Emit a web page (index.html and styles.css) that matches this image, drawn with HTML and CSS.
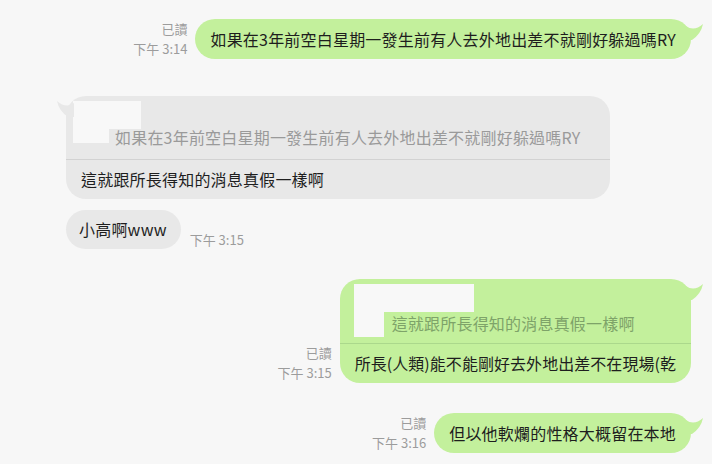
FILE: index.html
```html
<!DOCTYPE html>
<html lang="zh-Hant">
<head>
    <meta charset="UTF-8">
    <meta name="viewport" content="width=device-width, initial-scale=1.0">
    <title>Chat</title>
    <link rel="stylesheet" href="styles.css">
</head>
<body>
    <div class="chat">
        <div class="row mine">
            <div class="meta">
                <div>已讀</div>
                <div>下午 3:14</div>
            </div>
            <div class="bubble green">
                <svg class="tail tail-right" width="18" height="20" viewBox="0 0 18 20"><path d="M0 4 Q8 10 17 2 Q15 12 6 18 L0 18 Z"/></svg>
                <div class="text">如果在3年前空白星期一發生前有人去外地出差不就剛好躲過嗎RY</div>
            </div>
        </div>

        <div class="row theirs first">
            <div class="bubble gray reply">
                <svg class="tail tail-left" width="18" height="20" viewBox="0 0 18 20"><path d="M18 4 Q10 10 1 2 Q3 12 12 18 L18 18 Z"/></svg>
                <div class="quote quote-a">
                    <div class="thumb-top"></div>
                    <div class="quote-row">
                        <div class="thumb-foot"></div>
                        <span class="quote-text">如果在3年前空白星期一發生前有人去外地出差不就剛好躲過嗎RY</span>
                    </div>
                </div>
                <div class="text body">這就跟所長得知的消息真假一樣啊</div>
            </div>
        </div>

        <div class="row theirs next">
            <div class="bubble gray">
                <div class="text">小高啊www</div>
            </div>
            <div class="meta single">下午 3:15</div>
        </div>

        <div class="row mine spaced">
            <div class="meta">
                <div>已讀</div>
                <div>下午 3:15</div>
            </div>
            <div class="bubble green reply">
                <svg class="tail tail-right" width="18" height="20" viewBox="0 0 18 20"><path d="M0 4 Q8 10 17 2 Q15 12 6 18 L0 18 Z"/></svg>
                <div class="quote quote-b">
                    <div class="thumb-top"></div>
                    <div class="quote-row">
                        <div class="thumb-foot"></div>
                        <span class="quote-text">這就跟所長得知的消息真假一樣啊</span>
                    </div>
                </div>
                <div class="text body">所長(人類)能不能剛好去外地出差不在現場(乾</div>
            </div>
        </div>

        <div class="row mine spaced">
            <div class="meta">
                <div>已讀</div>
                <div>下午 3:16</div>
            </div>
            <div class="bubble green">
                <svg class="tail tail-right" width="18" height="20" viewBox="0 0 18 20"><path d="M0 4 Q8 10 17 2 Q15 12 6 18 L0 18 Z"/></svg>
                <div class="text">但以他軟爛的性格大概留在本地</div>
            </div>
        </div>
    </div>
</body>
</html>
```

FILE: styles.css
```css
* {
    margin: 0;
    padding: 0;
    box-sizing: border-box;
}

body {
    background-color: #f7f7f7;
    font-family: "Noto Sans CJK TC", "Noto Sans", sans-serif;
    color: #1e1e1e;
}

.chat {
    padding: 19px 21px 0 0;
}

.row {
    display: flex;
    align-items: flex-end;
    gap: 8px;
}

.row.mine {
    justify-content: flex-end;
}

.row.theirs {
    padding-left: 66px;
}

.row.first {
    margin-top: 37px;
}

.row.next {
    margin-top: 11px;
    gap: 9px;
}

.row.spaced {
    margin-top: 30px;
}

.meta {
    font-size: 13px;
    line-height: 20px;
    color: #9c9c9c;
    text-align: right;
    white-space: nowrap;
}

.meta.single {
    margin-bottom: -1px;
}

.bubble {
    position: relative;
    border-radius: 20px;
    font-size: 16px;
    letter-spacing: 0.2px;
    white-space: nowrap;
}

.bubble.green {
    background-color: #c3f09c;
}

.bubble.gray {
    background-color: #e8e8e8;
}

.bubble .text {
    padding: 8px 15px;
    line-height: 24px;
}

.bubble.gray .text {
    padding: 8px 14px 8px 13px;
    line-height: 23px;
}

.bubble.reply .text.body {
    padding: 7px 15px 8px 15px;
    line-height: 24px;
}

.bubble.green.reply .text.body {
    letter-spacing: 0.05px;
}

.tail {
    position: absolute;
    top: 3px;
}

.tail-right {
    right: -13px;
}

.tail-left {
    left: -10px;
}

.green .tail path {
    fill: #c3f09c;
}

.gray .tail path {
    fill: #e8e8e8;
}

.quote {
    padding-top: 5px;
}

.thumb-top, .thumb-foot {
    background-color: #f8f8f8;
    flex-shrink: 0;
}

.quote-row {
    display: flex;
    align-items: flex-start;
}

.quote-a {
    padding: 5px 29px 14px 7px;
    border-bottom: 1px solid #d2d2d2;
}

.quote-a .thumb-top {
    width: 68px;
    height: 28px;
}

.quote-a .thumb-foot {
    width: 36px;
    height: 14px;
}

.quote-a .quote-text {
    margin-left: 6px;
    line-height: 16px;
    color: #9a9a9a;
}

.quote-b {
    padding: 5px 15px 6px 14px;
    border-bottom: 1px solid #abd88c;
}

.quote-b .thumb-top {
    width: 120px;
    height: 28px;
}

.quote-b .thumb-foot {
    width: 30px;
    height: 25px;
}

.quote-b .quote-text {
    margin-left: 8px;
    line-height: 22px;
    color: #7ea369;
}
```
